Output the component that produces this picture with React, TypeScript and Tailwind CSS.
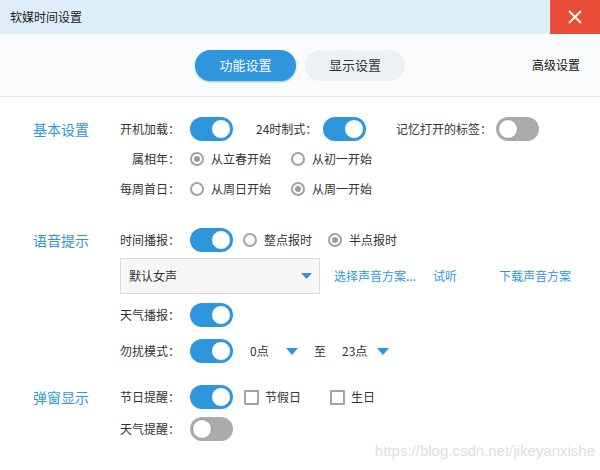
import type { ReactNode } from "react";

const FONT = { fontFamily: '"Noto Sans CJK SC", "Noto Sans", sans-serif' };

function Toggle({ on }: { on: boolean }) {
  return (
    <span
      className={
        "flex h-[24px] w-[43px] shrink-0 items-center rounded-full px-[2px] " +
        (on ? "justify-end bg-[#2d96dc]" : "justify-start bg-[#ababab]")
      }
    >
      <span
        className={
          "h-[20px] w-[20px] rounded-full bg-white " +
          (on ? "border-[1.5px] border-[#2d96dc]" : "border-[1.5px] border-[#9a9a9a]")
        }
      />
    </span>
  );
}

function Radio({ checked, label, w }: { checked?: boolean; label: string; w?: string }) {
  return (
    <span className={"flex items-center gap-[7px] " + (w ?? "")}>
      <span className="flex h-[14px] w-[14px] shrink-0 items-center justify-center rounded-full border-2 border-[#a3a3a3]">
        {checked && <span className="h-[6px] w-[6px] rounded-full bg-[#9c9c9c]" />}
      </span>
      <span className="text-[12px] text-[#333]">{label}</span>
    </span>
  );
}

function Check({ label, w }: { label: string; w?: string }) {
  return (
    <span className={"flex items-center gap-[6px] " + (w ?? "")}>
      <span className="h-[15px] w-[15px] shrink-0 rounded-[1px] border-2 border-[#a3a3a3]" />
      <span className="text-[12px] text-[#333]">{label}</span>
    </span>
  );
}

function Caret({ w = 12, h = 7 }: { w?: number; h?: number }) {
  return (
    <svg width={w} height={h} viewBox={`0 0 ${w} ${h}`}>
      <polygon points={`0,0 ${w},0 ${w / 2},${h}`} fill="#2d96dc" />
    </svg>
  );
}

function Label({ children }: { children: ReactNode }) {
  return <span className="w-[60px] shrink-0 text-right text-[12px] text-[#333]">{children}</span>;
}

function Section({ title, rowH, className, children }: { title: string; rowH: string; className?: string; children: ReactNode }) {
  return (
    <div className={"flex " + (className ?? "")}>
      <div className={"flex w-[120px] shrink-0 items-center pl-[33px] text-[14px] text-[#2f96dc] " + rowH}>{title}</div>
      <div className="flex flex-col">{children}</div>
    </div>
  );
}

export default function App() {
  return (
    <div className="relative h-[470px] w-[600px] overflow-hidden bg-white" style={FONT}>
      {/* title bar */}
      <div className="flex h-[34px] items-center bg-[#deeef8]">
        <span className="flex-1 pl-[10px] text-[12px] text-[#222]">软媒时间设置</span>
        <span className="flex h-full w-[50px] items-center justify-center bg-[#e94c36]">
          <svg width="14" height="14" viewBox="0 0 14 14">
            <path d="M1 1L13 13M13 1L1 13" stroke="white" strokeWidth="1.8" />
          </svg>
        </span>
      </div>

      {/* tabs */}
      <div className="grid h-[63px] grid-cols-[1fr_auto_1fr] items-center border-b border-[#e6e6e6] bg-[#f9fbfc]">
        <div />
        <div className="flex gap-[9px]">
          <button className="h-[31px] w-[101px] rounded-full bg-[#2d96dc] text-[13px] text-white shadow-[0_1px_2px_rgba(0,80,150,0.35)]">
            功能设置
          </button>
          <button className="h-[31px] w-[100px] rounded-full bg-[#edf1f6] text-[13px] text-[#333]">显示设置</button>
        </div>
        <div className="flex justify-end pr-[20px] text-[12px] text-[#111]">高级设置</div>
      </div>

      <div className="pt-[17px]">
        <Section title="基本设置" rowH="h-[30px]">
          <div className="flex h-[30px] items-center">
            <Label>开机加载：</Label>
            <span className="ml-[10px]"><Toggle on /></span>
            <span className="ml-[23px] w-[67px] text-[12px] text-[#333]">24时制式：</span>
            <Toggle on />
            <span className="ml-[30px] w-[100px] text-[12px] text-[#333]">记忆打开的标签：</span>
            <Toggle on={false} />
          </div>
          <div className="flex h-[30px] items-center">
            <Label>属相年：</Label>
            <span className="ml-[10px] flex">
              <Radio checked label="从立春开始" w="w-[101px]" />
              <Radio label="从初一开始" />
            </span>
          </div>
          <div className="flex h-[30px] items-center">
            <Label>每周首日：</Label>
            <span className="ml-[10px] flex">
              <Radio label="从周日开始" w="w-[101px]" />
              <Radio checked label="从周一开始" />
            </span>
          </div>
        </Section>

        <Section title="语音提示" rowH="h-[30px]" className="mt-[21px]">
          <div className="flex h-[30px] items-center">
            <Label>时间播报：</Label>
            <span className="ml-[10px]"><Toggle on /></span>
            <span className="ml-[10px] flex">
              <Radio label="整点报时" w="w-[85px]" />
              <Radio checked label="半点报时" />
            </span>
          </div>
          <div className="flex h-[42px] items-center">
            <div className="flex h-[36px] w-[200px] items-center justify-between border border-[#dcdcdc] bg-[#f7f7f7] pl-[8px] pr-[7px]">
              <span className="text-[12px] text-[#333]">默认女声</span>
              <Caret w={11} h={6} />
            </div>
            <span className="ml-[14px] w-[99px] text-[12px] text-[#2f96dc]">选择声音方案...</span>
            <span className="w-[66px] text-[12px] text-[#2f96dc]">试听</span>
            <span className="text-[12px] text-[#2f96dc]">下载声音方案</span>
          </div>
          <div className="flex h-[36px] items-center">
            <Label>天气播报：</Label>
            <span className="ml-[10px]"><Toggle on /></span>
          </div>
          <div className="flex h-[36px] items-center">
            <Label>勿扰模式：</Label>
            <span className="ml-[10px]"><Toggle on /></span>
            <span className="ml-[17px] w-[36px] text-[12px] text-[#333]">0点</span>
            <Caret />
            <span className="ml-[16px] w-[28px] text-[12px] text-[#333]">至</span>
            <span className="w-[35px] text-[12px] text-[#333]">23点</span>
            <Caret />
          </div>
        </Section>

        <Section title="弹窗显示" rowH="h-[32px]" className="mt-[12px]">
          <div className="flex h-[32px] items-center">
            <Label>节日提醒：</Label>
            <span className="ml-[10px]"><Toggle on /></span>
            <span className="ml-[11px] flex">
              <Check label="节假日" w="w-[86px]" />
              <Check label="生日" />
            </span>
          </div>
          <div className="flex h-[32px] items-center">
            <Label>天气提醒：</Label>
            <span className="ml-[10px]"><Toggle on={false} /></span>
          </div>
        </Section>
      </div>

      {/* watermark */}
      <span
        className="absolute bottom-[8px] right-[5px] text-[15px] text-[#dedede]"
        style={{ fontFamily: '"Liberation Sans", Arial, sans-serif' }}
      >
        https://blog.csdn.net/jikeyanxishe
      </span>
    </div>
  );
}
